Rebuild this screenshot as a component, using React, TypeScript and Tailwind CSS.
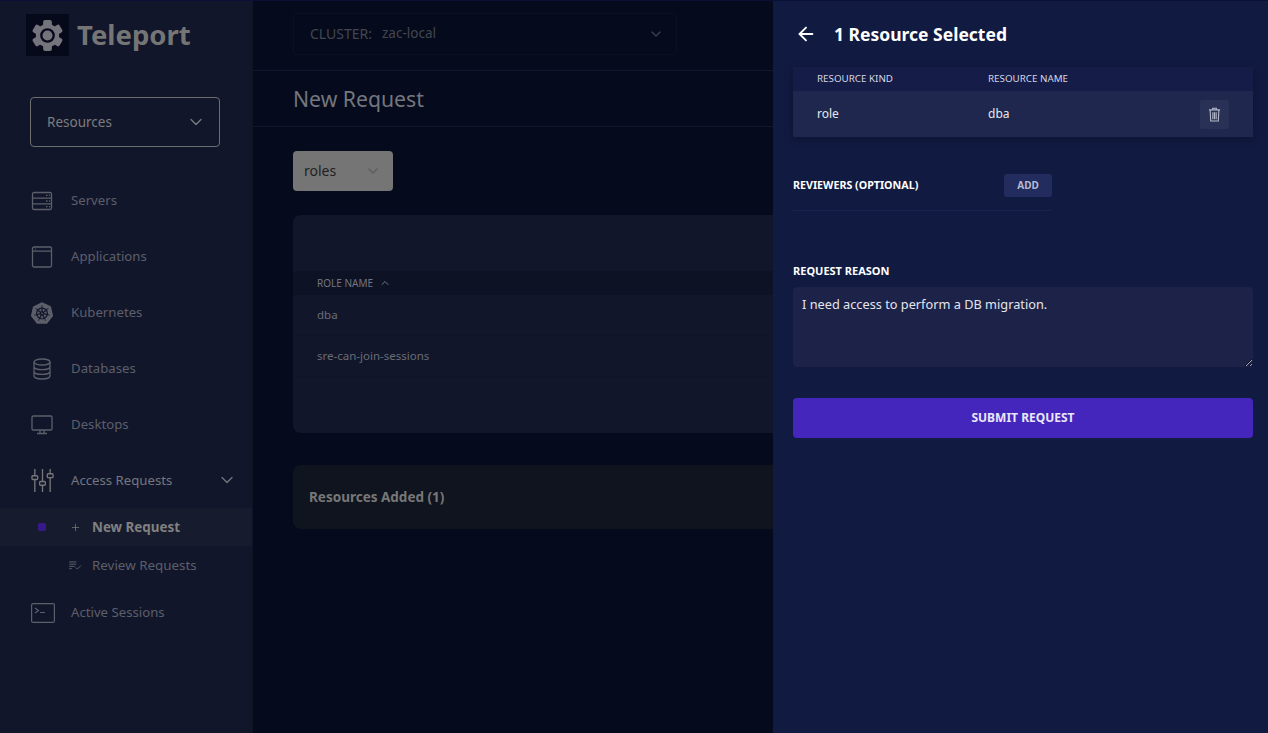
import React from 'react';
import { ArrowLeft, ChevronDown, ChevronUp, Plus } from 'lucide-react';
import { SiKubernetes } from 'react-icons/si';

function GearLogo() {
  const teeth = [0, 60, 120, 180, 240, 300];
  return (
    <svg viewBox="0 0 32 34" className="w-[31px] h-[33px]">
      <g fill="#74747c">
        <circle cx="16" cy="17" r="12" />
        {teeth.map((deg) => (
          <rect key={deg} x="11.5" y="1" width="9" height="8" rx="2" transform={`rotate(${deg} 16 17)`} />
        ))}
      </g>
      <circle cx="16" cy="17" r="6.4" fill="none" stroke="#06091a" strokeWidth="2.4" />
      <circle cx="16" cy="17" r="3" fill="none" stroke="#74747c" strokeWidth="1" />
    </svg>
  );
}

function ServerIcon() {
  return (
    <svg viewBox="0 0 22 22" className="w-[22px] h-[22px]" fill="none" stroke="#5c5f6a" strokeWidth="1.3">
      <rect x="1.5" y="2.5" width="19" height="17" rx="1.5" />
      <path d="M1.5 8.2h19M1.5 13.8h19M15 5.3h1.5M18 5.3h1M15 11h1.5M18 11h1M15 16.7h1.5M18 16.7h1" />
    </svg>
  );
}

function AppIcon() {
  return (
    <svg viewBox="0 0 22 22" className="w-[22px] h-[22px]" fill="none" stroke="#5c5f6a" strokeWidth="1.3">
      <rect x="1.5" y="1" width="19" height="20" rx="1.5" />
      <path d="M1.5 5.2h19M4 3.2h.8" />
    </svg>
  );
}

function DatabaseIcon() {
  return (
    <svg viewBox="0 0 22 22" className="w-[22px] h-[22px]" fill="none" stroke="#5c5f6a" strokeWidth="1.3">
      <ellipse cx="11" cy="4" rx="8" ry="3" />
      <path d="M3 4v14c0 1.7 3.6 3 8 3s8-1.3 8-3V4M3 8.7c0 1.7 3.6 3 8 3s8-1.3 8-3M3 13.4c0 1.7 3.6 3 8 3s8-1.3 8-3" />
    </svg>
  );
}

function DesktopIcon() {
  return (
    <svg viewBox="0 0 22 22" className="w-[22px] h-[22px]" fill="none" stroke="#5c5f6a" strokeWidth="1.3">
      <rect x="1" y="2" width="20" height="14" rx="1.2" />
      <path d="M9 16v3M13 16v3M6 19.5h10" />
    </svg>
  );
}

function SlidersIcon() {
  return (
    <svg viewBox="0 0 24 26" className="w-[23px] h-[25px]" fill="none" stroke="#777" strokeWidth="1.4">
      <path d="M4 1v7M4 12v13M12 1v13M12 18v7M20 1v5M20 10v15" />
      <rect x="1" y="8" width="6" height="4" rx="1" />
      <rect x="9" y="14" width="6" height="4" rx="1" />
      <rect x="17" y="6" width="6" height="4" rx="1" />
    </svg>
  );
}

function TerminalIcon() {
  return (
    <svg viewBox="0 0 24 20" className="w-[24px] h-[20px]" fill="none" stroke="#5c5f6a" strokeWidth="1.2">
      <rect x=".6" y=".6" width="22.8" height="18.8" rx="1.5" />
      <path d="M4 5l3.5 2.5L4 10M9 9.5h5" />
    </svg>
  );
}

function ReviewIcon() {
  return (
    <svg viewBox="0 0 14 10" className="w-[13px] h-[9px]" fill="none" stroke="#5c5f6a" strokeWidth="1.1">
      <path d="M0 1h8M0 3.5h8M0 6h6M0 8.5h3M7 7l2 2 4-4" />
    </svg>
  );
}

function TrashIcon() {
  return (
    <svg viewBox="0 0 14 16" className="w-[13px] h-[15px]" fill="none" stroke="#b4b7c8" strokeWidth="1.2">
      <path d="M1 3h12M5 3V1.2h4V3M2.3 3l.6 12h8.2l.6-12M5.2 5.5v7.5M7 5.5v7.5M8.8 5.5v7.5" />
    </svg>
  );
}

function NavItem({ icon, label, active }: { icon: React.ReactNode; label: string; active?: boolean }) {
  return (
    <div className={`h-14 flex items-center pl-[31px] pr-[15px] text-[13.2px] ${active ? 'text-[#747680]' : 'text-[#5c5f6a]'}`}>
      <div className="w-[40px] flex items-center pt-px">{icon}</div>
      <span className="pt-px">{label}</span>
      {active && <ChevronDown className="ml-auto w-[20px] h-[20px]" strokeWidth={1.5} />}
    </div>
  );
}

function Sidebar() {
  return (
    <aside className="w-[253px] shrink-0 bg-[#12162a] border-r border-[#0f1324]">
      <div className="h-[69px] flex items-start pt-[13px] pl-[26px]">
        <div className="w-[43px] h-[42px] bg-[#06091a] flex items-center justify-center">
          <GearLogo />
        </div>
        <span className="ml-[8px] text-[27.5px] leading-[42px] font-bold text-[#757575]">Teleport</span>
      </div>
      <div className="mt-[27px] ml-[30px] w-[190px] h-[50px] border border-[#6e6e6e] rounded-[4px] flex items-center justify-between pl-[16px] pr-[13px] text-[13.5px] text-[#7d7d7d]">
        <span>Resources</span>
        <ChevronDown className="w-[20px] h-[20px]" strokeWidth={1.5} />
      </div>
      <nav className="mt-[25px]">
        <NavItem icon={<ServerIcon />} label="Servers" />
        <NavItem icon={<AppIcon />} label="Applications" />
        <NavItem icon={<SiKubernetes className="w-[22px] h-[22px] text-[#5c5f6a]" />} label="Kubernetes" />
        <NavItem icon={<DatabaseIcon />} label="Databases" />
        <NavItem icon={<DesktopIcon />} label="Desktops" />
        <NavItem icon={<SlidersIcon />} label="Access Requests" active />
        <div className="h-[38px] bg-[#171b2e] flex items-center text-[13.4px]">
          <div className="w-[8px] h-[8px] rounded-[2px] bg-[#37198c] ml-[38px]" />
          <Plus className="ml-[24px] w-[11px] h-[11px] text-[#808080]" strokeWidth={1.5} />
          <span className="ml-[11px] font-bold text-[#808080]">New Request</span>
        </div>
        <div className="h-[38px] flex items-center text-[13.4px] text-[#5c5f6a]">
          <div className="ml-[69px]">
            <ReviewIcon />
          </div>
          <span className="ml-[10px]">Review Requests</span>
        </div>
        <NavItem icon={<TerminalIcon />} label="Active Sessions" />
      </nav>
    </aside>
  );
}

function Main() {
  return (
    <main className="flex-1 min-w-0 overflow-hidden">
      <div className="h-[70px] border-b border-[#11162a] pt-[12px] pl-[40px]">
        <div className="w-[384px] h-[42px] border border-[#0b1023] rounded-[4px] flex items-center pl-[16px] pr-[12px] text-sm text-[#43464f]">
          <span>CLUSTER:</span>
          <span className="ml-[10px] text-[13.5px]">zac-local</span>
          <ChevronDown className="ml-auto w-[16px] h-[16px] text-[#3e414d]" />
        </div>
      </div>
      <div className="h-[56px] border-b border-[#11162a] pl-[40px] flex items-center text-[21.2px] text-[#74767e]">New Request</div>
      <div className="pl-[40px]">
        <div className="mt-[24px] w-[100px] h-[40px] bg-[#757575] rounded-[4px] flex items-center pl-[11px] pr-[12px] text-sm text-[#1f1f1f]">
          <span>roles</span>
          <ChevronDown className="ml-auto w-[16px] h-[16px] text-[#5c5c5c]" />
        </div>
        <div className="mt-[24px] h-[218px] bg-[#12162a] rounded-l-[8px]">
          <div className="h-[56px]" />
          <div className="h-[24px] bg-[#0e1225] pl-[24px] flex items-center text-[10px] text-[#74767e]">
            <span>ROLE NAME</span>
            <ChevronUp className="ml-[6px] w-[12px] h-[12px]" />
          </div>
          <div className="h-[41px] pl-[24px] flex items-center text-[11.5px] text-[#6a6c76] border-b border-[#101427]">dba</div>
          <div className="h-[41px] pl-[24px] flex items-center text-[11.5px] text-[#6a6c76] border-b border-[#101427]">sre-can-join-sessions</div>
        </div>
        <div className="mt-[32px] h-[64px] bg-[#10141f] rounded-l-[8px] pl-[16px] flex items-center text-[13.5px] font-bold text-[#777]">Resources Added (1)</div>
      </div>
    </main>
  );
}

function Drawer() {
  return (
    <section className="w-[495px] shrink-0 bg-[#111a41] pl-[20px] pr-[15px]">
      <div className="h-[66px] flex items-center text-white">
        <ArrowLeft className="ml-[2px] w-[22px] h-[22px]" strokeWidth={2} />
        <span className="ml-[17px] text-[17.5px] font-bold">1 Resource Selected</span>
      </div>
      <div className="shadow-[0_2px_8px_rgba(0,0,0,0.25)]">
        <div className="h-[24px] bg-[#141c47] flex items-center text-[9.8px] text-[#d5d7e2]">
          <span className="ml-[24px] w-[171px]">RESOURCE KIND</span>
          <span>RESOURCE NAME</span>
        </div>
        <div className="h-[46px] bg-[#1f274f] flex items-center text-xs text-[#e6e7ee]">
          <span className="ml-[24px] w-[171px]">role</span>
          <span>dba</span>
          <button className="ml-auto mr-[24px] w-[29px] h-[29px] rounded-[2px] bg-[#2a3157] flex items-center justify-center">
            <TrashIcon />
          </button>
        </div>
      </div>
      <div className="mt-[37px] w-[259px] h-[37px] border-b border-[#1a2350] flex items-start">
        <span className="mt-[3px] text-[10.7px] font-bold text-white">REVIEWERS (OPTIONAL)</span>
        <button className="ml-auto w-[48px] h-[23px] rounded-[3px] bg-[#222c5e] text-[10px] font-bold text-[#b6bad0]">ADD</button>
      </div>
      <div className="mt-[52px] text-[11px] font-bold text-white leading-[16px]">REQUEST REASON</div>
      <textarea
        readOnly
        defaultValue="I need access to perform a DB migration."
        className="mt-[8px] block w-full h-[80px] bg-[#1c2248] rounded-[4px] px-[9px] py-[8px] text-[12.75px] leading-[18px] text-[#e4e5ec] outline-none resize-y"
      />
      <button className="mt-[31px] w-full h-[40px] rounded-[4px] bg-[#4526bd] text-xs font-bold text-[#e9e6fa]">SUBMIT REQUEST</button>
    </section>
  );
}

export default function App() {
  return (
    <div className="h-[733px] w-[1268px] flex overflow-hidden bg-[#050b1d] border-t border-[#0a1036] font-['Noto_Sans',sans-serif]">
      <Sidebar />
      <Main />
      <Drawer />
    </div>
  );
}
